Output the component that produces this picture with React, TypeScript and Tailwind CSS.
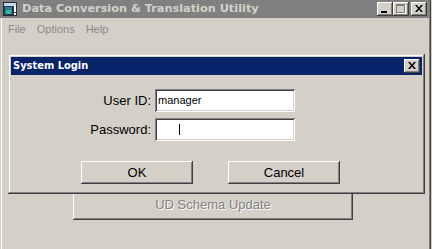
import type { ReactNode } from "react";

const raised =
  "shadow-[inset_-1px_-1px_#404040,inset_1px_1px_#ffffff,inset_-2px_-2px_#808080,inset_2px_2px_#d4d0c8]";
const sunken =
  "shadow-[inset_1px_1px_#808080,inset_-1px_-1px_#ffffff,inset_2px_2px_#404040,inset_-2px_-2px_#d4d0c8]";

function CaptionButton({ children, className = "" }: { children: ReactNode; className?: string }) {
  return (
    <div className={`relative h-[14px] w-[16px] bg-[#d4d0c8] ${raised} ${className}`}>{children}</div>
  );
}

function CloseGlyph() {
  return (
    <svg width="8" height="7" viewBox="0 0 8 7" className="absolute left-[4px] top-[3px]">
      <path d="M0 0h2l2 2.5L6 0h2L5 3.5 8 7H6L4 4.5 2 7H0l3-3.5z" fill="#000" />
    </svg>
  );
}

function WinButton({ label, className = "", disabled = false }: { label: string; className?: string; disabled?: boolean }) {
  return (
    <div
      className={`flex items-center justify-center bg-[#d4d0c8] text-[13px] ${raised} ${className} ${
        disabled ? "text-[#808080] [text-shadow:1px_1px_0_#ffffff]" : "text-black"
      }`}
    >
      {label}
    </div>
  );
}

function AppIcon() {
  return (
    <svg width="16" height="15" viewBox="0 0 16 15">
      <rect x="0.5" y="0.5" width="13" height="13" fill="#1d3b5e" stroke="#2a2a2a" />
      <rect x="1" y="1" width="12" height="3" fill="#c8d8e8" />
      <rect x="2" y="5" width="7" height="7" fill="#2f7f8f" />
      <rect x="3" y="8" width="5" height="4" fill="#3fb58c" />
      <rect x="11" y="4" width="2" height="6" fill="#ffffff" />
      <rect x="11" y="11" width="2" height="2" fill="#ffffff" />
    </svg>
  );
}

export default function App() {
  return (
    <div className="relative h-[249px] w-[432px] overflow-hidden bg-[#d4d0c8] font-['Liberation_Sans',Arial,sans-serif]">
      <div className="flex h-full w-[431px] flex-col shadow-[inset_1px_0_#d4d0c8,inset_2px_0_#ffffff,inset_-1px_0_#404040,inset_-2px_0_#808080]">
        {/* caption */}
        <div className="flex h-[18px] w-[429px] shrink-0 items-center bg-[#808080] pl-[3px] pr-[2px]">
          <AppIcon />
          <span className="ml-[3px] font-['DejaVu_Sans',sans-serif] text-[11.3px] font-bold text-[#d4d0c8]">
            Data Conversion &amp; Translation Utility
          </span>
          <div className="ml-auto flex items-center">
            <CaptionButton>
              <div className="absolute left-[4px] top-[9px] h-[2px] w-[6px] bg-black" />
            </CaptionButton>
            <CaptionButton>
              <div className="absolute left-[3px] top-[2px] h-[9px] w-[9px] border border-t-2 border-[#808080] shadow-[1px_1px_#ffffff]" />
            </CaptionButton>
            <CaptionButton className="ml-[2px]">
              <CloseGlyph />
            </CaptionButton>
          </div>
        </div>

        {/* menu */}
        <div className="flex h-[20px] shrink-0 items-center gap-[11px] pl-[8px] pt-[2px] text-[11px] text-[#8a8a8a]">
          <span>File</span>
          <span>Options</span>
          <span>Help</span>
        </div>

        {/* main content */}
        <div className="pl-[73px] pt-[150px]">
          <WinButton label="UD Schema Update" disabled className="h-[32px] w-[280px] pt-[1px]" />
        </div>
      </div>

      {/* login dialog */}
      <div className="absolute left-[8px] top-[54px] flex h-[140px] w-[417px] flex-col bg-[#d4d0c8] p-[3px] shadow-[inset_-1px_-1px_#404040,inset_1px_1px_#d4d0c8,inset_-2px_-2px_#808080,inset_2px_2px_#ffffff]">
        <div className="flex h-[18px] shrink-0 items-center bg-[#0a246a] pl-[2px] pr-[2px]">
          <span className="font-['DejaVu_Sans_Condensed','DejaVu_Sans',sans-serif] text-[11px] font-bold text-white">
            System Login
          </span>
          <CaptionButton className="ml-auto">
            <CloseGlyph />
          </CaptionButton>
        </div>

        <div className="flex flex-col gap-[6px] pt-[14px]">
          <div className="flex items-center">
            <span className="w-[141px] pr-[1px] text-right text-[13px] text-black">User ID:</span>
            <div className={`ml-[3px] flex h-[23px] w-[140px] items-center bg-white pl-[3px] text-[11px] text-black ${sunken}`}>
              manager
            </div>
          </div>
          <div className="flex items-center">
            <span className="w-[141px] pr-[1px] text-right text-[13px] text-black">Password:</span>
            <div className={`ml-[3px] flex h-[23px] w-[140px] items-center bg-white pl-[24px] ${sunken}`}>
              <div className="h-[11px] w-px bg-black" />
            </div>
          </div>
        </div>

        <div className="mt-[20px] flex gap-[35px] pl-[70px]">
          <WinButton label="OK" className="h-[23px] w-[112px]" />
          <WinButton label="Cancel" className="h-[23px] w-[112px]" />
        </div>
      </div>
    </div>
  );
}
